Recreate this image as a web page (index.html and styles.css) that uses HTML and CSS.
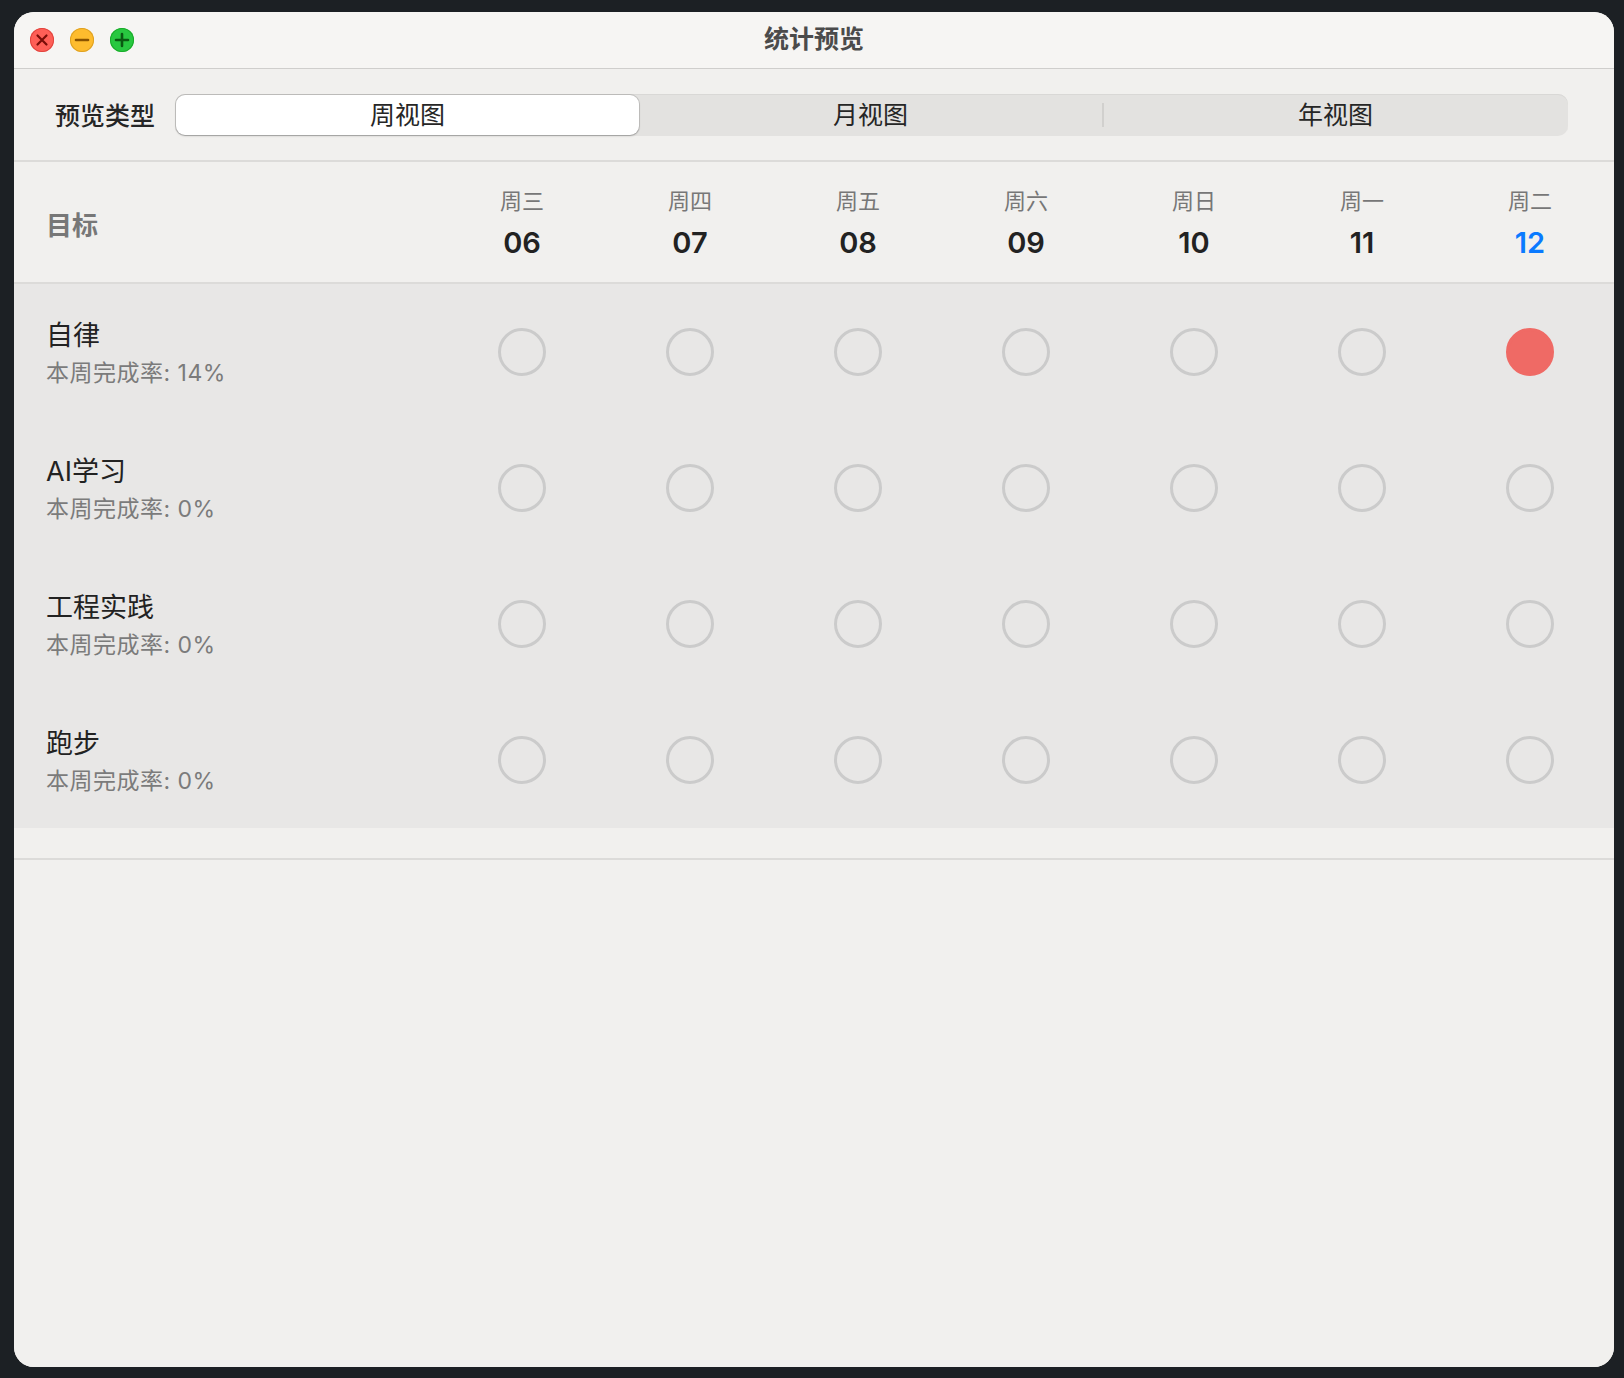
FILE: index.html
```html
<!DOCTYPE html>
<html lang="zh">
<head>
<meta charset="utf-8">
<title>统计预览</title>
<link rel="stylesheet" href="styles.css">
</head>
<body>
<div class="window">
  <div class="titlebar">
    <div class="lights">
      <span class="light red"><svg viewBox="0 0 24 24"><path d="M7.5 7.5l9 9M16.5 7.5l-9 9" stroke="#7a0d08" stroke-width="2.2" stroke-linecap="round"/></svg></span>
      <span class="light yellow"><svg viewBox="0 0 24 24"><path d="M6 12h12" stroke="#8a5300" stroke-width="2.6" stroke-linecap="round"/></svg></span>
      <span class="light green"><svg viewBox="0 0 24 24"><path d="M6 12h12M12 6v12" stroke="#0a5a12" stroke-width="2.6" stroke-linecap="round"/></svg></span>
    </div>
    <div class="title">统计预览</div>
  </div>

  <div class="segbar">
    <div class="seglabel">预览类型</div>
    <div class="segctl">
      <div class="seg active">周视图</div>
      <div class="seg">月视图</div>
      <div class="segdiv"></div>
      <div class="seg">年视图</div>
    </div>
  </div>

  <div class="grid header">
    <div class="goalhead">目标</div>
    <div class="day"><span class="dname">周三</span><span class="dnum">06</span></div>
    <div class="day"><span class="dname">周四</span><span class="dnum">07</span></div>
    <div class="day"><span class="dname">周五</span><span class="dnum">08</span></div>
    <div class="day"><span class="dname">周六</span><span class="dnum">09</span></div>
    <div class="day"><span class="dname">周日</span><span class="dnum">10</span></div>
    <div class="day"><span class="dname">周一</span><span class="dnum">11</span></div>
    <div class="day"><span class="dname">周二</span><span class="dnum today">12</span></div>
  </div>

  <div class="rows">
    <div class="grid row">
      <div class="goal"><div class="gname">自律</div><div class="gsub">本周完成率: 14%</div></div>
      <div class="cell"><span class="dot"></span></div>
      <div class="cell"><span class="dot"></span></div>
      <div class="cell"><span class="dot"></span></div>
      <div class="cell"><span class="dot"></span></div>
      <div class="cell"><span class="dot"></span></div>
      <div class="cell"><span class="dot"></span></div>
      <div class="cell"><span class="dot done"></span></div>
    </div>
    <div class="grid row">
      <div class="goal"><div class="gname">AI学习</div><div class="gsub">本周完成率: 0%</div></div>
      <div class="cell"><span class="dot"></span></div>
      <div class="cell"><span class="dot"></span></div>
      <div class="cell"><span class="dot"></span></div>
      <div class="cell"><span class="dot"></span></div>
      <div class="cell"><span class="dot"></span></div>
      <div class="cell"><span class="dot"></span></div>
      <div class="cell"><span class="dot"></span></div>
    </div>
    <div class="grid row">
      <div class="goal"><div class="gname">工程实践</div><div class="gsub">本周完成率: 0%</div></div>
      <div class="cell"><span class="dot"></span></div>
      <div class="cell"><span class="dot"></span></div>
      <div class="cell"><span class="dot"></span></div>
      <div class="cell"><span class="dot"></span></div>
      <div class="cell"><span class="dot"></span></div>
      <div class="cell"><span class="dot"></span></div>
      <div class="cell"><span class="dot"></span></div>
    </div>
    <div class="grid row">
      <div class="goal"><div class="gname">跑步</div><div class="gsub">本周完成率: 0%</div></div>
      <div class="cell"><span class="dot"></span></div>
      <div class="cell"><span class="dot"></span></div>
      <div class="cell"><span class="dot"></span></div>
      <div class="cell"><span class="dot"></span></div>
      <div class="cell"><span class="dot"></span></div>
      <div class="cell"><span class="dot"></span></div>
      <div class="cell"><span class="dot"></span></div>
    </div>
  </div>

  <div class="spacer"></div>
  <div class="rest"></div>
</div>
</body>
</html>
```

FILE: styles.css
```css
* { box-sizing: border-box; }
html, body { height: 100%; }
body {
  margin: 0;
  padding: 12px 0 0 14px;
  background: #1c2024;
  font-family: "Inter", "Noto Sans CJK SC", sans-serif;
  overflow: hidden;
}
.window {
  width: 1600px;
  height: 1355px;
  border-radius: 20px;
  overflow: hidden;
  background: #f1f0ee;
  display: flex;
  flex-direction: column;
}
.titlebar {
  height: 57px;
  flex: none;
  background: #f6f5f3;
  border-bottom: 1px solid #cfcecc;
  display: flex;
  align-items: center;
  position: relative;
}
.lights {
  display: flex;
  gap: 16px;
  padding-left: 16px;
  padding-bottom: 1px;
}
.light {
  width: 24px;
  height: 24px;
  border-radius: 50%;
  display: flex;
}
.light svg { width: 24px; height: 24px; }
.red { background: #fe5f57; box-shadow: inset 0 0 0 1px #e0443e; }
.yellow { background: #febc2e; box-shadow: inset 0 0 0 1px #dea123; }
.green { background: #28c840; box-shadow: inset 0 0 0 1px #1aab29; }
.title {
  position: absolute;
  left: 0; right: 0;
  top: 10px;
  line-height: 34px;
  text-align: center;
  font-size: 25px;
  font-weight: 700;
  color: #4b4b4b;
}
.segbar {
  height: 93px;
  flex: none;
  border-bottom: 2px solid #dcdbd9;
  display: flex;
  align-items: center;
  padding: 0 46px 0 41px;
  gap: 20px;
}
.seglabel {
  font-size: 25px;
  color: #262626;
  font-weight: 500;
  padding-bottom: 2px;
}
.segctl {
  flex: 1;
  height: 42px;
  background: #e3e2e0;
  border-radius: 10px;
  box-shadow: inset 0 1px 0 #d9d8d6;
  display: flex;
  align-items: center;
  padding: 1px;
}
.seg {
  flex: 1;
  height: 40px;
  display: flex;
  align-items: center;
  justify-content: center;
  font-size: 25px;
  color: #262626;
  border-radius: 9px;
  padding-bottom: 3px;
}
.seg.active {
  background: #ffffff;
  box-shadow: 0 0 0 1px rgba(0,0,0,0.12), 0 1px 2px rgba(0,0,0,0.22);
}
.segdiv {
  width: 2px;
  height: 24px;
  background: #d1d0ce;
}
.grid {
  display: grid;
  grid-template-columns: 424px repeat(7, 168px);
}
.header {
  height: 122px;
  flex: none;
  border-bottom: 2px solid #dcdbd9;
  background: #f1f0ee;
  align-items: center;
}
.goalhead {
  padding-left: 32px;
  font-size: 26px;
  font-weight: 600;
  color: #777777;
  padding-top: 2px;
}
.day {
  display: flex;
  flex-direction: column;
  align-items: center;
  gap: 8px;
  padding-top: 4px;
}
.dname {
  font-size: 22px;
  line-height: 30px;
  color: #777;
}
.dnum {
  font-size: 29px;
  line-height: 38px;
  font-weight: 600;
  color: #222;
}
.dnum.today { color: #0a7aff; }
.rows {
  background: #e8e7e6;
  flex: none;
}
.row {
  height: 136px;
  align-items: center;
}
.goal {
  padding-left: 32px;
  display: flex;
  flex-direction: column;
  gap: 5px;
  padding-top: 2px;
}
.gname {
  font-size: 27px;
  line-height: 34px;
  color: #222;
}
.gsub {
  font-size: 23px;
  line-height: 30px;
  color: #7b7b7b;
  letter-spacing: 0.5px;
}
.cell {
  display: flex;
  justify-content: center;
  align-items: center;
}
.dot {
  width: 48px;
  height: 48px;
  border-radius: 50%;
  border: 3px solid #cbcbcb;
}
.dot.done {
  background: #ef6a65;
  border-color: #ef6a65;
}
.spacer {
  height: 32px;
  flex: none;
  border-bottom: 2px solid #dcdbd9;
}
.rest {
  flex: 1;
  background: #f1f0ee;
}
```
